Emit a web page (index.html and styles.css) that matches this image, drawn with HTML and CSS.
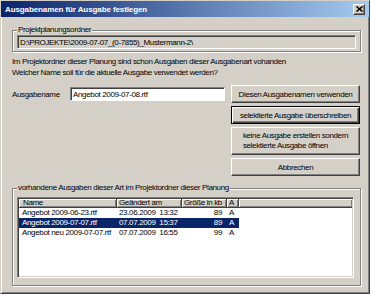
FILE: index.html
```html
<!DOCTYPE html>
<html lang="de">
<head>
  <meta charset="UTF-8" />
  <title>Ausgabenamen für Ausgabe festlegen</title>
  <link rel="stylesheet" href="styles.css">
</head>
<body>
  <div class="window">
    <div class="titlebar">
      <span class="title">Ausgabenamen für Ausgabe festlegen</span>
      <span class="close">
        <svg width="7" height="6" viewBox="0 0 7 6"><path d="M0.5 0.5 L6.5 5.5 M6.5 0.5 L0.5 5.5" stroke="#000" stroke-width="1.6" /></svg>
      </span>
    </div>

    <div class="content">
      <fieldset class="group path-group">
        <legend>Projektplanungsordner</legend>
        <div class="path">D:\PROJEKTE\2009-07-07_(0-7855)_Mustermann-2\</div>
      </fieldset>

      <p class="info">Im Projektordner dieser Planung sind schon Ausgaben dieser Ausgabenart vohanden<br>Welcher Name soll für die aktuelle Ausgabe verwendet werden?</p>

      <div class="main">
        <div class="name-row">
          <label for="ausgabename">Ausgabename</label>
          <input id="ausgabename" class="field" type="text" value="Angebot 2009-07-08.rtf">
        </div>
        <div class="buttons">
          <button class="btn">Diesen Ausgabenamen verwenden</button>
          <button class="btn default">selektierte Ausgabe überschreiben</button>
          <button class="btn tall"><span>keine Ausgabe erstellen sondern<br>selektierte Ausgabe öffnen</span></button>
          <button class="btn">Abbrechen</button>
        </div>
      </div>

      <fieldset class="group list-group">
        <legend>vorhandene Ausgaben dieser Art im Projektordner dieser Planung</legend>
        <div class="listview">
          <table>
            <colgroup>
              <col class="c-name"><col class="c-date"><col class="c-size"><col class="c-attr"><col>
            </colgroup>
            <thead>
              <tr><th class="name">Name</th><th>Geändert am</th><th>Größe in kb</th><th>A</th><th class="fill"></th></tr>
            </thead>
            <tbody>
              <tr><td class="name">Angebot 2009-06-23.rtf</td><td>23.06.2009&nbsp; 13:32</td><td class="size">89</td><td>A</td><td class="fill"></td></tr>
              <tr class="selected"><td class="name">Angebot 2009-07-07.rtf</td><td>07.07.2009&nbsp; 15:37</td><td class="size">89</td><td>A</td><td class="fill"></td></tr>
              <tr><td class="name">Angebot neu 2009-07-07.rtf</td><td>07.07.2009&nbsp; 16:55</td><td class="size">99</td><td>A</td><td class="fill"></td></tr>
            </tbody>
          </table>
        </div>
      </fieldset>
    </div>
  </div>
</body>
</html>
```

FILE: styles.css
```css
:root {
  --face: #d4d0c8;
  --shadow: #808080;
  --dark: #404040;
  --light: #fff;
  --select: #0a246a;
}
body {
  margin: 0;
  background: #fff;
  font-family: "Liberation Sans", Arial, sans-serif;
  font-size: 8px;
  letter-spacing: -0.35px;
  color: #000;
}
.window {
  width: 370px;
  height: 294px;
  box-sizing: border-box;
  background: var(--face);
  border: 1px solid;
  border-color: var(--face) var(--dark) var(--dark) var(--face);
  box-shadow: inset 1px 1px var(--light), inset -1px -1px var(--shadow);
  display: flex;
  flex-direction: column;
}
.titlebar {
  height: 16px;
  display: flex;
  align-items: center;
  justify-content: space-between;
  padding: 0 4px 0 4px;
  background: linear-gradient(to right, #0a246a, #a6caf0);
  color: #fff;
  font-weight: bold;
  letter-spacing: -0.1px;
}
.close {
  width: 12px;
  height: 11px;
  box-sizing: border-box;
  background: var(--face);
  border: 1px solid;
  border-color: var(--light) var(--dark) var(--dark) var(--light);
  box-shadow: inset -1px -1px var(--shadow);
  display: flex;
  align-items: center;
  justify-content: center;
}
.content {
  flex: 1;
  padding: 8px 8px 0 11px;
  display: flex;
  flex-direction: column;
}
.group {
  margin: 0;
  padding: 0 4px 2px;
  min-width: 0;
  border: 1px solid var(--shadow);
  box-shadow: 1px 1px 0 var(--light), inset 1px 1px 0 var(--light);
}
.group legend {
  padding: 0 1px;
  line-height: 10px;
  background: var(--face);
}
.path {
  height: 14px;
  box-sizing: border-box;
  border: 1px solid;
  border-color: var(--shadow) var(--light) var(--light) var(--shadow);
  box-shadow: inset 1px 1px var(--dark);
  padding: 0 2px;
  line-height: 13px;
  white-space: nowrap;
  overflow: hidden;
}
.info {
  margin: 4px 0 0;
  line-height: 11px;
}
.main {
  display: flex;
  justify-content: space-between;
  margin-top: 7px;
  padding-right: 1px;
}
.name-row {
  display: flex;
  align-items: center;
  height: 18px;
}
.name-row label {
  width: 58px;
}
.field {
  width: 155px;
  height: 14px;
  box-sizing: border-box;
  margin: 0;
  background: #fff;
  border: 1px solid;
  border-color: var(--shadow) var(--light) var(--light) var(--shadow);
  box-shadow: inset 1px 1px var(--dark);
  padding: 0 2px;
  font: inherit;
  letter-spacing: inherit;
  color: #000;
  outline: none;
}
.buttons {
  width: 129px;
  display: flex;
  flex-direction: column;
  gap: 3px;
}
.btn {
  height: 18px;
  box-sizing: border-box;
  margin: 0;
  padding: 0;
  background: var(--face);
  border: 1px solid;
  border-color: var(--light) var(--dark) var(--dark) var(--light);
  box-shadow: inset -1px -1px var(--shadow);
  font: inherit;
  letter-spacing: inherit;
  color: #000;
}
.btn.default {
  border-color: #000;
  box-shadow: inset 1px 1px var(--light), inset -1px -1px var(--dark), inset -2px -2px var(--shadow);
}
.btn.tall {
  height: 28px;
}
.btn.tall span {
  display: inline-block;
  text-align: left;
  line-height: 10px;
}
.list-group {
  margin-top: 7px;
  padding: 4px 6px 7px 4px;
}
.listview {
  height: 81px;
  box-sizing: border-box;
  background: #fff;
  border: 1px solid;
  border-color: var(--shadow) var(--light) var(--light) var(--shadow);
  box-shadow: inset 1px 1px var(--dark), inset -1px -1px var(--face);
  padding: 1px 1px 1px 1px;
  overflow: hidden;
}
table {
  width: 100%;
  table-layout: fixed;
  border-collapse: separate;
  border-spacing: 0;
}
col.c-name { width: 98px; }
col.c-date { width: 65px; }
col.c-size { width: 45px; }
col.c-attr { width: 12px; }
th {
  font-weight: normal;
  text-align: left;
  padding: 0 2px;
  line-height: 8px;
  background: var(--face);
  border-right: 1px solid var(--dark);
  border-bottom: 1px solid var(--dark);
  box-shadow: inset 1px 1px var(--light), inset -1px -1px var(--shadow);
  white-space: nowrap;
  overflow: hidden;
}
th.name {
  padding-left: 4px;
}
th.fill {
  border-right: none;
}
td {
  padding: 0 2px;
  line-height: 10px;
  white-space: nowrap;
  overflow: hidden;
}
td.name {
  padding-left: 3px;
}
td.size {
  text-align: right;
  padding-right: 5px;
}
tr.selected td:not(.fill) {
  background: var(--select);
  color: #fff;
}
```
